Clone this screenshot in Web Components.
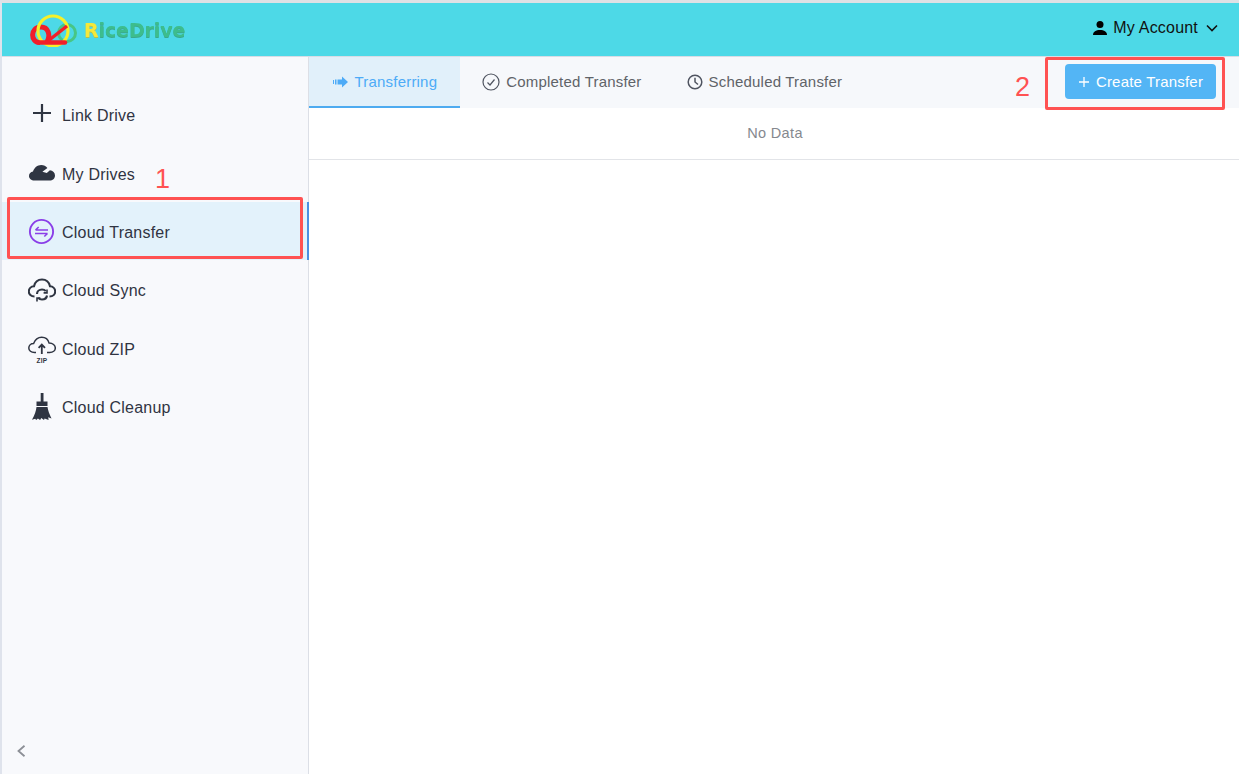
<!DOCTYPE html>
<html>
<head>
<meta charset="utf-8">
<title>RiceDrive</title>
<style>
  html, body { margin: 0; height: 100%; overflow: hidden; }
  body { font-family: "Liberation Sans", Arial, sans-serif; background: #fff; }
</style>
</head>
<body>
<rd-app>
  <rd-header slot="header"></rd-header>
  <rd-sidebar slot="sidebar">
    <rd-menu-item icon="plus">Link Drive</rd-menu-item>
    <rd-menu-item icon="cloud">My Drives</rd-menu-item>
    <rd-menu-item icon="transfer" active>Cloud Transfer</rd-menu-item>
    <rd-menu-item icon="sync">Cloud Sync</rd-menu-item>
    <rd-menu-item icon="zip">Cloud ZIP</rd-menu-item>
    <rd-menu-item icon="broom">Cloud Cleanup</rd-menu-item>
  </rd-sidebar>
  <rd-transfer-view slot="main"></rd-transfer-view>
</rd-app>
<rd-callout n="1" style="left:7px;top:197px;width:296px;height:62px;--nx:145px;--ny:-35px"></rd-callout>
<rd-callout n="2" style="left:1045px;top:57px;width:180px;height:53px;--nx:-33px;--ny:13px"></rd-callout>

<script>
'use strict';

(function() {
  const ICONS = {
    plus: `<svg width="28" height="28" viewBox="0 0 28 28"><path d="M14 3v18M5 12h18" stroke="#2f3542" stroke-width="2.200" fill="none"/></svg>`,
    cloud: `<svg width="28" height="28" viewBox="0 0 28 28"><path d="M6.500 20.500c-3.200 0-5.500-2-5.500-4.600 0-2.300 1.700-4.200 4-4.500C6.300 7.800 9.300 5 13.200 5c2.600 0 4.800 1 6.200 2.900l-5 3.900 4.400 1.300 3.100-2.800c3 .4 5.100 2.400 5.100 5.100 0 2.900-2.300 5.100-5.500 5.100z" fill="#2f3542"/></svg>`,
    transfer: `<svg width="28" height="28" viewBox="0 0 28 28" fill="none" stroke="#8a3ee8"><circle cx="13.500" cy="13.500" r="11.600" stroke-width="1.900"/><path d="M7.500 12h12.500M7.500 12l3.200-3M19.500 15.500H7M19.500 15.500l-3.200 3" stroke-width="1.600"/></svg>`,
    sync: `<svg width="28" height="28" viewBox="0 0 28 28" fill="none" stroke="#2f3542" stroke-width="2.100"><path d="M6.500 20.500C3 20.500.8 18.300.8 15.500s2.200-5 5.200-5.200C7 6 10.200 3.500 14 3.500s7 2.500 8 6.800c3 .2 5.200 2.400 5.200 5.200s-2.200 5-5.700 5"/><path d="M9 18c0-2.600 2.200-4.500 5-4.500 1.600 0 3 .7 3.800 1.700M19 19.500c-.3 2.300-2.300 4-5 4-1.600 0-3-.7-3.800-1.700"/><path d="M19 13.500v3.400h-3.400M9 25.500v-3.400h3.400" stroke-width="1.600"/></svg>`,
    zip: `<svg width="28" height="32" viewBox="0 0 28 32" fill="none" stroke="#2f3542" stroke-width="1.500"><path d="M8 19.500H6.500C3.200 19.500.8 17.700.8 15s2.200-4.600 4.800-4.600C7 6.800 10 4.200 13.700 4.200c3.600 0 6.500 2.400 7.400 5.900 3.600 0 6.200 2.200 6.200 4.900s-2.400 4.500-5.600 4.500H19"/><path d="M13.800 21v-9.500M10.600 14.800l3.200-3.300 3.200 3.300" stroke-width="1.800"/><text x="14" y="29.500" text-anchor="middle" font-family="Liberation Sans" font-size="6.500" font-weight="700" fill="#2f3542" stroke="none">ZIP</text></svg>`,
    broom: `<svg width="28" height="30" viewBox="0 0 28 30" fill="#2f3542"><path d="M12.700 1h2.800v8.500h4v4.500H8.500V9.500h4.200z"/><path d="M8.500 15h11c.6 3.500 1.800 7 4 11.500l-3.300-1.300.4 2.800-4-1.400-.6 1.400-2.700-2-1.200 2-2.200-1.500-1.700 1.500-1-1.300-3.200 1C6.800 23 8 19 8.500 15z"/></svg>`
  };

  class RdApp extends HTMLElement {
    constructor() {
      super();
      const shadow = this.attachShadow({ mode: 'open' });
      shadow.innerHTML = `
        <style>
          :host { display: flex; flex-direction: column; height: 100vh; box-sizing: border-box; border-top: 3px solid #dfe1e5; border-left: 2px solid #dfe3ec; }
          .body { flex: 1; display: flex; min-height: 0; }
          ::slotted([slot=sidebar]) { flex: 0 0 auto; }
          ::slotted([slot=main]) { flex: 1; min-width: 0; }
        </style>
        <slot name="header"></slot>
        <div class="body">
          <slot name="sidebar"></slot>
          <slot name="main"></slot>
        </div>
      `;
    }
  }

  class RdHeader extends HTMLElement {
    constructor() {
      super();
      const shadow = this.attachShadow({ mode: 'open' });
      shadow.innerHTML = `
        <style>
          :host { display: flex; align-items: center; justify-content: space-between; flex: 0 0 auto; box-sizing: border-box; height: 54px; background: #4dd9e7; border-bottom: 1px solid #d8dde6; padding: 0 20px 3px 28px; }
          .logo { display: flex; align-items: center; gap: 4px; margin-top: 3px; }
          .name { font: 700 19px "DejaVu Sans", sans-serif; letter-spacing: -.1px; color: #3dbd8d; filter: blur(.7px); text-shadow: 0 1px 0 #3aa98c; }
          .name b { color: #f5e83a; text-shadow: 0 1px 0 #b5c24a; }
          .account { display: flex; align-items: center; gap: 5px; font-size: 16px; letter-spacing: .2px; color: #111; }
          .account svg { display: block; }
        </style>
        <div class="logo">
          <svg width="50" height="34" viewBox="0 0 50 34" fill="none">
            <circle cx="37" cy="20" r="8.500" stroke="#48c685" stroke-width="3" />
            <path d="M10 29.500C0 29.500 0 14 11 14c7 0 10 8 6 15" stroke="#f11f2a" stroke-width="5"/>
            <circle cx="23" cy="18" r="15" stroke="#f5f02a" stroke-width="3.200"/>
            <path d="M8 29.500h27" stroke="#f11f2a" stroke-width="4.500" stroke-linecap="round"/>
            <path d="M18 28L37 13" stroke="#f11f2a" stroke-width="3.500"/>
          </svg>
          <span class="name"><b>R</b>iceDrive</span>
        </div>
        <div class="account">
          <svg width="16" height="16" viewBox="0 0 16 16" fill="#000"><circle cx="8" cy="4.500" r="3.500"/><path d="M1 15c0-3.500 3-5 7-5s7 1.500 7 5z"/></svg>
          <span>My Account</span>
          <svg width="14" height="14" viewBox="0 0 14 14" fill="none" stroke="#111" stroke-width="1.600" style="margin-left:2px"><path d="M2 4.500l5 5 5-5"/></svg>
        </div>
      `;
    }
  }

  class RdSidebar extends HTMLElement {
    constructor() {
      super();
      const shadow = this.attachShadow({ mode: 'open' });
      shadow.innerHTML = `
        <style>
          :host { display: flex; flex-direction: column; box-sizing: border-box; width: 307px; background: #f8f9fc; border-right: 1px solid #dcdfe6; }
          .menu { flex: 1; padding-top: 28.500px; }
          .collapse { padding: 0 0 17px 14px; line-height: 0; }
        </style>
        <div class="menu"><slot></slot></div>
        <div class="collapse">
          <svg width="12" height="12" viewBox="0 0 12 12" fill="none" stroke="#8c8f96" stroke-width="1.800"><path d="M8.500 .8L2.500 6l6 5.200"/></svg>
        </div>
      `;
    }
  }

  class RdMenuItem extends HTMLElement {
    constructor() {
      super();
      const shadow = this.attachShadow({ mode: 'open' });
      const icon = ICONS[this.getAttribute('icon')] || '';
      shadow.innerHTML = `
        <style>
          :host { display: flex; align-items: center; box-sizing: border-box; height: 58.330px; padding-top: 3.500px; font-size: 16px; letter-spacing: .22px; color: #303442; padding-left: 26px; }
          :host([active]) { background: #e3f2fb; box-shadow: inset -2px 0 0 #4a90e2; margin-right: -1px; }
          .ic { width: 28px; height: 28px; display: flex; align-items: center; justify-content: center; margin: -2px 6px 0 0; }
          .ic svg { flex: none; display: block; }
        </style>
        <span class="ic">${icon}</span>
        <slot></slot>
      `;
    }
  }

  class RdTab extends HTMLElement {
    constructor() {
      super();
      const shadow = this.attachShadow({ mode: 'open' });
      shadow.innerHTML = `
        <style>
          :host { display: flex; align-items: center; gap: 6px; box-sizing: border-box; height: 51px; padding: 0 22.500px 2px; font-size: 15px; letter-spacing: .2px; color: #5f6368; }
          :host([active]) { background: #e1f0fa; color: #4dabf7; border-bottom: 2px solid #4dabf0; padding-bottom: 0; }
          ::slotted(svg) { display: block; }
        </style>
        <slot name="icon"></slot>
        <slot></slot>
      `;
    }
  }

  class RdTransferView extends HTMLElement {
    constructor() {
      super();
      const shadow = this.attachShadow({ mode: 'open' });
      shadow.innerHTML = `
        <style>
          :host { display: block; background: #fff; }
          .bar { display: flex; align-items: flex-start; justify-content: space-between; height: 51px; background: #f6f8fb; padding-right: 23px; }
          .tabs { display: flex; }
          .btn { display: flex; align-items: center; justify-content: center; gap: 6px; box-sizing: border-box; width: 151px; height: 35px; margin-top: 7px; border: 0; padding: 0; border-radius: 4px; background: #53b5f5; color: #fff; font: 15px "Liberation Sans", Arial, sans-serif; letter-spacing: .2px; }
          .empty { height: 52px; box-sizing: border-box; display: flex; align-items: center; justify-content: center; padding: 0 0 2px 2px; border-bottom: 1px solid #e2e4e8; color: #85888e; font-size: 14.500px; letter-spacing: .35px; }
        </style>
        <div class="bar">
          <div class="tabs">
            <rd-tab active>
              <svg slot="icon" width="17" height="14" viewBox="0 0 17 14" fill="#4dabf7"><path d="M1 5h1v4H1zM3 4.500h1.500v5H3zM5.500 4.500H10V1.500L16 7l-6 5.500v-3H5.500z"/></svg>
              Transferring
            </rd-tab>
            <rd-tab>
              <svg slot="icon" width="18" height="18" viewBox="0 0 18 18" fill="none" stroke="#4f5460" stroke-width="1.200"><circle cx="9" cy="9" r="8"/><path d="M5.500 9.500l2.500 2.500 4.500-5.500"/></svg>
              Completed Transfer
            </rd-tab>
            <rd-tab>
              <svg slot="icon" width="16" height="16" viewBox="0 0 16 16" fill="none" stroke="#4f5460" stroke-width="1.500"><circle cx="8" cy="8" r="6.800"/><path d="M8 3.800V8l3 2.500"/></svg>
              Scheduled Transfer
            </rd-tab>
          </div>
          <button class="btn">
            <svg width="12" height="12" viewBox="0 0 12 12" stroke="#fff" stroke-width="1.300"><path d="M6 1v10M1 6h10"/></svg>
            Create Transfer
          </button>
        </div>
        <div class="empty">No Data</div>
      `;
    }
  }

  // red marks drawn over the screenshot
  class RdCallout extends HTMLElement {
    constructor() {
      super();
      const shadow = this.attachShadow({ mode: 'open' });
      shadow.innerHTML = `
        <style>
          :host { position: absolute; box-sizing: border-box; border: 3.500px solid #ff5252; border-radius: 2px; pointer-events: none; }
          span { position: absolute; left: var(--nx); top: var(--ny); font: 27px/28px "Liberation Sans", Arial, sans-serif; color: #ff5252; }
        </style>
        <span>${this.getAttribute('n')}</span>
      `;
    }
  }

  customElements.define('rd-app', RdApp);
  customElements.define('rd-header', RdHeader);
  customElements.define('rd-sidebar', RdSidebar);
  customElements.define('rd-menu-item', RdMenuItem);
  customElements.define('rd-tab', RdTab);
  customElements.define('rd-transfer-view', RdTransferView);
  customElements.define('rd-callout', RdCallout);
})();
</script>
</body>
</html>
